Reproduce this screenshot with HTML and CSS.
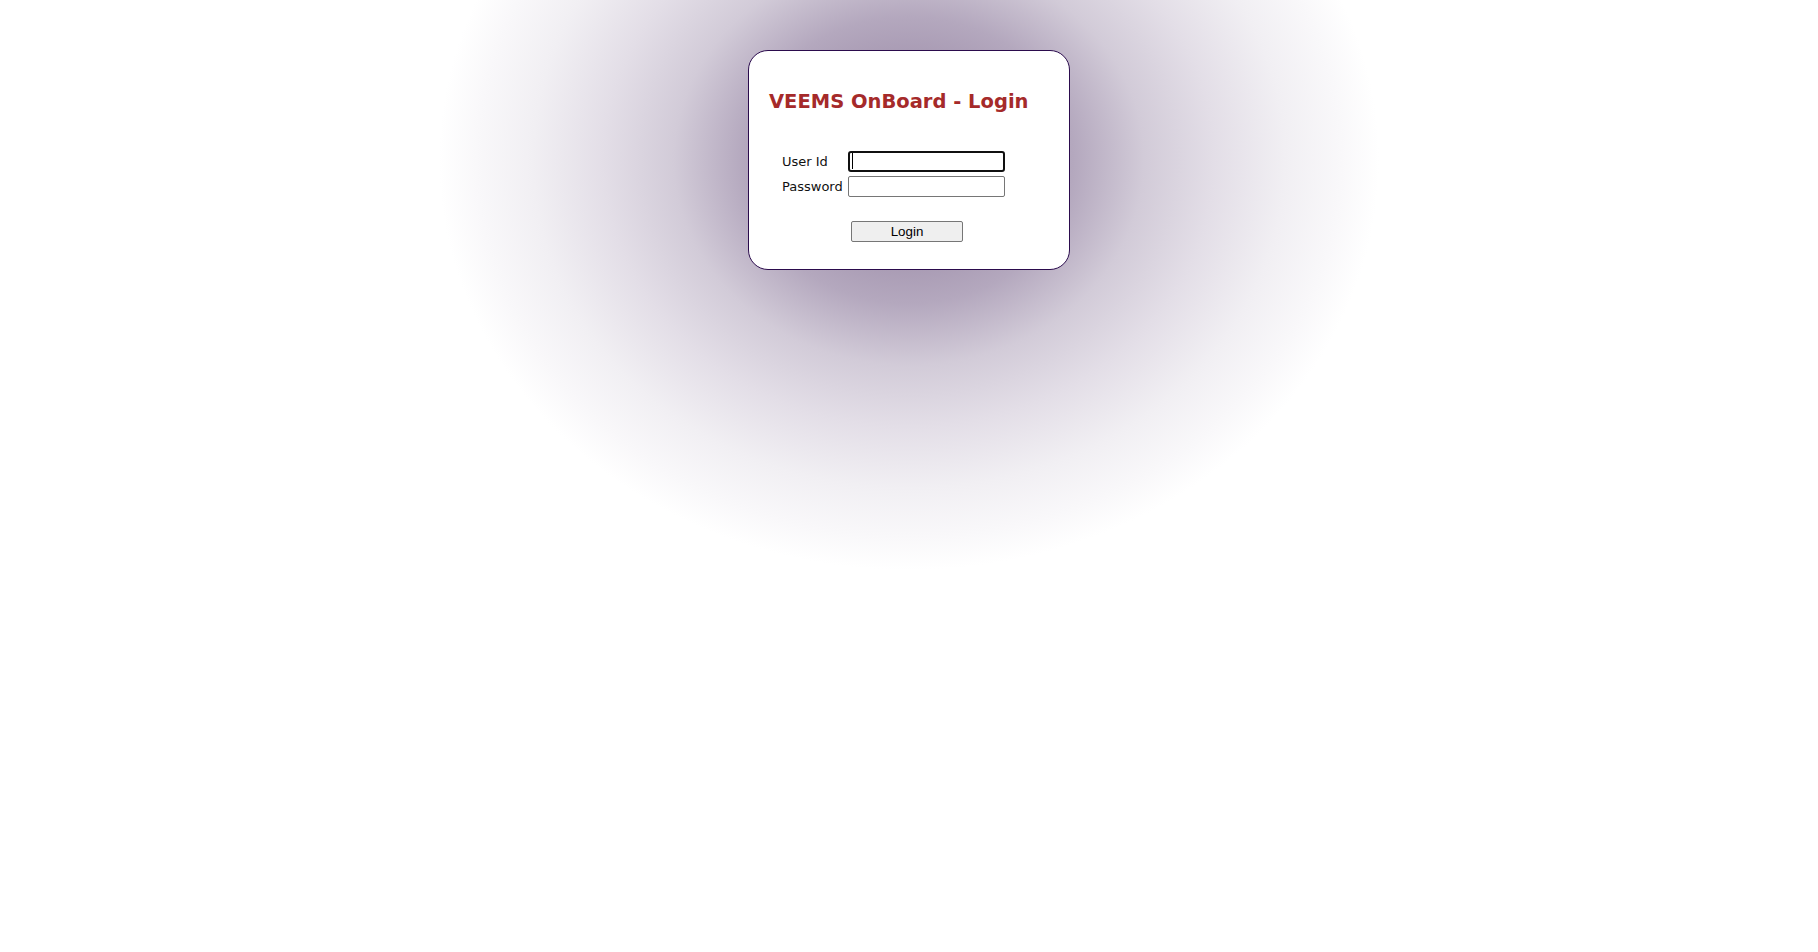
FILE: index.html
```html
<!DOCTYPE html>
<html lang="en">
<head>
<meta charset="utf-8">
<title>VEEMS OnBoard - Login</title>
<link rel="stylesheet" href="styles.css">
</head>
<body>
<div class="page">
  <div class="card">
    <h1 class="title">VEEMS OnBoard - Login</h1>
    <form class="form">
      <div class="fields">
        <label class="label" for="uid">User Id</label>
        <span class="field-wrap">
          <input id="uid" class="field field-focus" type="text">
          <span class="caret"></span>
        </span>
        <label class="label" for="pwd">Password</label>
        <input id="pwd" class="field" type="password">
      </div>
      <div class="actions">
        <button class="btn" type="button">Login</button>
      </div>
    </form>
  </div>
</div>
</body>
</html>
```
FILE: styles.css
```css
html, body {
  margin: 0;
  padding: 0;
}

body {
  font-family: "DejaVu Sans", Verdana, sans-serif;
  color: #000;
  overflow: hidden;
  background-color: #ffffff;
  background-image: radial-gradient(
    ellipse 470px 410px at 50% 160px,
    #9f90ab 0%,
    #a89ab3 25%,
    #b4a8be 35%,
    #d2cbd8 50%,
    #e3dee7 65%,
    #f1eff3 80%,
    #f9f8fa 92%,
    #ffffff 100%
  );
  background-repeat: no-repeat;
  min-height: 100vh;
}

.page {
  display: flex;
  justify-content: center;
  align-items: flex-start;
  padding-top: 50px;
}

.card {
  width: 322px;
  box-sizing: border-box;
  border: 1px solid #2b0b4d;
  border-radius: 20px;
  background: #ffffff;
  padding: 39px 20px 27px 20px;
}

.title {
  margin: 0;
  font-family: "DejaVu Sans", Verdana, sans-serif;
  font-weight: 700;
  font-size: 19.5px;
  line-height: 23px;
  color: #a52a2a;
  white-space: nowrap;
}

.form {
  margin: 38px 0 0 0;
}

.fields {
  display: grid;
  grid-template-columns: auto 157px;
  column-gap: 5px;
  row-gap: 4px;
  align-items: center;
  justify-content: start;
  padding-left: 13px;
}

.label {
  font-size: 13px;
  line-height: 15px;
  color: #111;
  white-space: nowrap;
}

.field-wrap {
  position: relative;
  display: block;
  width: 157px;
  height: 21px;
}

.field {
  display: block;
  width: 157px;
  height: 21px;
  box-sizing: border-box;
  margin: 0;
  padding: 1px 2px;
  border: 1px solid #767676;
  border-radius: 2px;
  background: #ffffff;
  font-family: "Liberation Sans", Arial, sans-serif;
  font-size: 13.33px;
  outline: none;
}

.field-focus {
  border: 2px solid #101010;
  border-radius: 3px;
}

.caret {
  position: absolute;
  left: 4px;
  top: 2px;
  width: 1px;
  height: 16px;
  background: #000;
}

.actions {
  display: flex;
  justify-content: center;
  margin-top: 24px;
  padding-right: 4px;
}

.btn {
  width: 112px;
  height: 21px;
  box-sizing: border-box;
  margin: 0;
  padding: 0;
  border: 1px solid #767676;
  border-radius: 2px;
  background: #efefef;
  color: #000;
  font-family: "Liberation Sans", Arial, sans-serif;
  font-size: 13.33px;
  line-height: 17px;
}
```
